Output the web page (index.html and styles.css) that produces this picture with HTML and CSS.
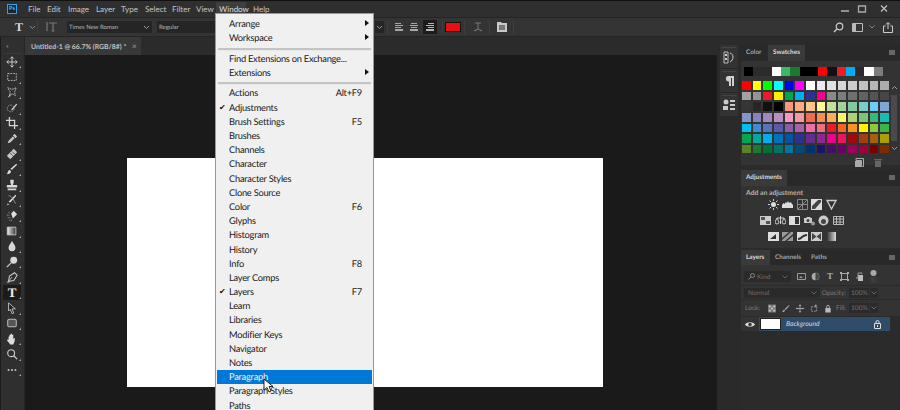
FILE: index.html
```html
<!DOCTYPE html>
<html lang="en">
<head>
<meta charset="utf-8">
<title>Photoshop Window menu</title>
<link rel="stylesheet" href="styles.css">
</head>
<body>
<div class="app">
  <header class="menubar">
    <span class="logo">Ps</span>
    <nav class="menus">
      <span class="m">File</span><span class="m">Edit</span><span class="m">Image</span><span class="m">Layer</span><span class="m">Type</span><span class="m">Select</span><span class="m">Filter</span><span class="m">View</span><span class="m m-on">Window</span><span class="m">Help</span>
    </nav>
    <div class="winbtns">
      <svg width="10" height="10" viewBox="0 0 10 10"><path d="M1 7h8" stroke="#aaa" stroke-width="1.6"/></svg>
      <svg width="10" height="10" viewBox="0 0 10 10"><path d="M1.500 2h7v6h-7z" fill="none" stroke="#aaa" stroke-width="1.300"/></svg>
      <svg class="wclose" width="10" height="10" viewBox="0 0 10 10"><path d="M2 1.500l6 6M8 1.500l-6 6" stroke="#bbb" stroke-width="1.300"/></svg>
    </div>
  </header>

  <section class="options">
    <span class="o-t">T</span>
    <svg class="chev" width="7" height="5" viewBox="0 0 7 5"><path d="M1 1l2.500 2.500L6 1" fill="none" stroke="#888"/></svg>
    <i class="sep s1"></i>
    <svg class="o-tt" width="12" height="12" viewBox="0 0 12 12"><path d="M3 2h8M7 2v8M5.500 10h3M1 1v9" fill="none" stroke="#777" stroke-width="1.200"/></svg>
    <span class="field f-font">Times New Roman<svg width="7" height="5" viewBox="0 0 7 5"><path d="M1 1l2.500 2.500L6 1" fill="none" stroke="#999"/></svg></span>
    <span class="field f-style">Regular</span>
    <span class="field f-aa"><svg width="7" height="5" viewBox="0 0 7 5"><path d="M1 1l2.500 2.500L6 1" fill="none" stroke="#999"/></svg></span>
    <i class="sep s2"></i>
    <svg class="al" width="10" height="10" viewBox="0 0 10 10"><path d="M1 1h6v1H1zM1 3h8v1H1zM1 5h6v1H1zM1 7h8v2H1z" fill="#a8a8a8"/></svg>
    <svg class="al" width="10" height="10" viewBox="0 0 10 10"><path d="M2 1h6v1H2zM1 3h8v1H1zM2 5h6v1H2zM1 7h8v2H1z" fill="#a8a8a8"/></svg>
    <span class="al-on"><svg width="10" height="10" viewBox="0 0 10 10"><path d="M3 1h6v1H3zM1 3h8v1H1zM3 5h6v1H3zM1 7h8v2H1z" fill="#b5b5b5"/></svg></span>
    <i class="sep s3"></i>
    <span class="color"></span>
    <i class="sep s5"></i>
    <svg class="warp" width="10" height="10" viewBox="0 0 10 10"><path d="M2 1h6M5 1v6M1 9l4-2 4 2" fill="none" stroke="#777" stroke-width="1.100"/></svg>
    <i class="sep s4"></i>
    <svg class="pan" width="10" height="10" viewBox="0 0 10 10"><path d="M0 0h4l1 1h5v9H0z" fill="#c8c8c8"/><path d="M2 3h6v5H2z" fill="#777"/></svg>
    <i class="sep s4"></i>
    <div class="o-right">
      <svg width="11" height="11" viewBox="0 0 11 11"><circle cx="6.500" cy="4.500" r="3.300" fill="none" stroke="#ccc" stroke-width="1.200"/><path d="M4 7l-3 3" stroke="#ccc" stroke-width="1.400"/></svg>
      <svg class="wsp" width="11" height="9" viewBox="0 0 11 9"><path d="M.5.500h10v8H.5z" fill="none" stroke="#bbb"/><path d="M1 1h3v7H1z" fill="#bbb"/></svg>
      <svg class="chev2" width="6" height="4" viewBox="0 0 6 4"><path d="M.5.500l2.500 2.500L5.500.500" fill="none" stroke="#888"/></svg>
      <svg class="share" width="10" height="11" viewBox="0 0 10 11"><path d="M2.500 4H.5v6.500h9V4h-2M5 7V.8M3 2.500L5 .5l2 2" fill="none" stroke="#ccc"/></svg>
    </div>
  </section>

  <main class="work">
    <aside class="tools">
      <div class="grip">&#187;</div>
      <div class="tool"><svg viewBox="0 0 14 14"><path d="M7 1v12M1 7h12M7 1L5 3M7 1l2 2M7 13l-2-2M7 13l2-2M1 7l2-2M1 7l2 2M13 7l-2-2M13 7l-2 2" fill="none" stroke="#d0d0d0" stroke-width="1.100"/></svg></div>
      <div class="tool"><svg viewBox="0 0 14 14"><path d="M2 3h10v8H2z" fill="none" stroke="#c8c8c8" stroke-dasharray="2 1.200"/></svg></div>
      <div class="tool"><svg viewBox="0 0 14 14"><path d="M2 2l5 2 5-2-2 5 1 4-4-2-3 3 1-5z" fill="none" stroke="#c8c8c8" stroke-dasharray="2 .8"/><path d="M3 13l2-3" stroke="#ddd"/></svg></div>
      <div class="tool"><svg viewBox="0 0 14 14"><circle cx="5.500" cy="7.500" r="4" fill="none" stroke="#999" stroke-dasharray="2 1"/><path d="M6 9l6-7 1 1-6 7z" fill="#ddd"/></svg></div>
      <div class="tool"><svg viewBox="0 0 14 14"><path d="M4 0v10h10M0 4h10v10" fill="none" stroke="#d4d4d4" stroke-width="1.500"/></svg></div>
      <div class="tool"><svg viewBox="0 0 14 14"><path d="M2 12l1-3 5-5 2 2-5 5zM8 3l2-2 3 3-2 2z" fill="#c8c8c8"/></svg></div>
      <div class="tool"><svg viewBox="0 0 14 14"><path d="M1 9l8-8 4 4-8 8z" fill="#c8c8c8"/><path d="M5 6l3 3M7 4l3 3" stroke="#444"/></svg></div>
      <div class="tool"><svg viewBox="0 0 14 14"><path d="M12 1l1 1-6 6-2-1zM4 8l2 2c-1 3-3 3-5 3 1-1 1-4 3-5z" fill="#ddd"/></svg></div>
      <div class="tool"><svg viewBox="0 0 14 14"><path d="M5 1h4v3L8 7h5v3H1V7h5L5 4zM2 11h10v2H2z" fill="#d8d8d8"/></svg></div>
      <div class="tool"><svg viewBox="0 0 14 14"><path d="M11 1l1 1-7 8-2-1zM2 11l2 1-3 1z" fill="#ddd"/><path d="M3 2c3 0 5 3 8 9" fill="none" stroke="#aaa"/></svg></div>
      <div class="tool"><svg viewBox="0 0 14 14"><path d="M6 4l3-3 4 4-5 5z" fill="#ddd"/><path d="M1 6h3M2 9h3M4 12h4M3 3h2" stroke="#bbb" stroke-dasharray="1 1"/></svg></div>
      <div class="tool"><svg viewBox="0 0 14 14"><defs><linearGradient id="g"><stop offset="0" stop-color="#eee"/><stop offset="1" stop-color="#333"/></linearGradient></defs><path d="M1.500 2.500h10v9h-10z" fill="url(#g)" stroke="#ccc"/></svg></div>
      <div class="tool"><svg viewBox="0 0 14 14"><path d="M7 1c1 3 4 5 4 8a4 4 0 0 1-8 0c0-3 3-5 4-8z" fill="#d8d8d8"/></svg></div>
      <div class="tool"><svg viewBox="0 0 14 14"><circle cx="9" cy="5" r="4" fill="#d8d8d8"/><path d="M6 8l-5 5" stroke="#ccc" stroke-width="1.500"/></svg></div>
      <div class="tool"><svg viewBox="0 0 14 14"><path d="M3 12l1-6 6-4 3 3-4 6z" fill="none" stroke="#ccc" stroke-width="1.200"/><path d="M3 12l4-5" stroke="#ccc"/><path d="M1 13h3" stroke="#ccc"/></svg></div>
      <div class="tool on"><span class="tool-t">T</span></div>
      <div class="tool"><svg viewBox="0 0 14 14"><path d="M3 1l8 7H7l2 5-2 .5-2-5-2 2z" fill="#222" stroke="#ccc"/></svg></div>
      <div class="tool"><svg viewBox="0 0 14 14"><rect x="2" y="2.500" width="10" height="9" rx="2" fill="#555" stroke="#bbb" stroke-width="1.200"/></svg></div>
      <div class="tool"><svg viewBox="0 0 14 14"><path d="M3 8V4h1v3-5h1.500v5V1H7v6-5h1.500v6l.5-2h1.500L10 10l-1.500 3.500H5L1 8.500l1-1z" fill="#ddd"/></svg></div>
      <div class="tool"><svg viewBox="0 0 14 14"><circle cx="6" cy="6" r="4" fill="none" stroke="#ccc" stroke-width="1.300"/><path d="M9 9l4 4" stroke="#ccc" stroke-width="1.500"/></svg></div>
      <div class="tool dots"><svg viewBox="0 0 14 14"><path d="M2 6h2v2H2zM6 6h2v2H6zM10 6h2v2h-2z" fill="#ddd"/></svg></div>
    </aside>

    <section class="doc">
      <div class="tabs">
        <div class="tab">Untitled-1 @ 66.7% (RGB/8#) * <span class="x">&#215;</span></div>
      </div>
      <div class="stage"><div class="canvas"></div></div>
    </section>

    <aside class="dock">
      <div class="strip"></div>
      <div class="dock-group">
        <div class="grip-h"></div>
        <svg width="12" height="13" viewBox="0 0 12 13"><path d="M1 1h4v11H1z" fill="none" stroke="#bbb"/><path d="M2 3h2v2H2zM2 7h2v2H2z" fill="#ccc"/><path d="M7 2c4 1 4 7 0 9" fill="none" stroke="#ccc"/></svg>
      </div>
      <div class="dock-group">
        <div class="grip-h"></div>
        <svg width="12" height="12" viewBox="0 0 12 12"><path d="M5 1h6v10H9V3H8v8H6V6.500a2.800 2.800 0 0 1-1-5.500z" fill="#d0d0d0"/></svg>
      </div>
      <div class="dock-group">
        <div class="grip-h"></div>
        <svg width="12" height="12" viewBox="0 0 12 12"><circle cx="3" cy="3" r="2.500" fill="#ccc"/><path d="M7 1h5v2H7zM7 5h5v2H7zM0 7h5v4H0zM7 9h5v2H7z" fill="#ccc"/></svg>
      </div>
    </aside>

    <aside class="panels">
      <div class="strip"></div>
      <section class="panel p-swatches">
        <div class="ptabs"><span class="pt w-color">Color</span><span class="pt act w-sw">Swatches</span><i class="pmenu"></i></div>
        <div class="recent">
          <i style="background:#000"></i><i style="background:#2b2b2b"></i><i style="background:#2b2b2b"></i><i style="background:#fff"></i><i style="background:#3cb868"></i><i style="background:#1a7b30"></i><i style="background:#000"></i><i style="background:#000"></i><i style="background:#f00"></i><i style="background:#111"></i><i style="background:#ed1c24"></i><i style="background:#00aeef"></i><i style="background:#2b2b2b"></i><i style="background:#fff"></i><i style="background:#7d7d7d"></i>
        </div>
        <div class="sw-wrap">
          <div class="swatches">
            <i style="background:#f00"></i><i style="background:#ff0"></i><i style="background:#0f0"></i><i style="background:#0ff"></i><i style="background:#00f"></i><i style="background:#f0f"></i><i style="background:#fff"></i><i style="background:#ebebeb"></i><i style="background:#e1e1e1"></i><i style="background:#d7d7d7"></i><i style="background:#ccc"></i><i style="background:#c2c2c2"></i><i style="background:#b7b7b7"></i><i style="background:#acacac"></i>
            <i style="background:#a1a1a1"></i><i style="background:#959595"></i><i style="background:#ed1c24"></i><i style="background:#fff200"></i><i style="background:#00a651"></i><i style="background:#00aeef"></i><i style="background:#2e3192"></i><i style="background:#ec008c"></i><i style="background:#898989"></i><i style="background:#7d7d7d"></i><i style="background:#707070"></i><i style="background:#626262"></i><i style="background:#555"></i><i style="background:#464646"></i>
            <i style="background:#363636"></i><i style="background:#262626"></i><i style="background:#111"></i><i style="background:#000"></i><i style="background:#f7977a"></i><i style="background:#f9ad81"></i><i style="background:#fdc68a"></i><i style="background:#fff79a"></i><i style="background:#c4df9b"></i><i style="background:#a2d39c"></i><i style="background:#82ca9d"></i><i style="background:#7bcdc8"></i><i style="background:#6ecff6"></i><i style="background:#7ea7d8"></i>
            <i style="background:#8493ca"></i><i style="background:#8882be"></i><i style="background:#a187be"></i><i style="background:#bc8dbf"></i><i style="background:#f49ac2"></i><i style="background:#f6989d"></i><i style="background:#f26c4f"></i><i style="background:#f68e55"></i><i style="background:#fbaf5c"></i><i style="background:#fff467"></i><i style="background:#acd372"></i><i style="background:#7cc576"></i><i style="background:#3bb878"></i><i style="background:#1abbb4"></i>
            <i style="background:#00bff3"></i><i style="background:#438ccb"></i><i style="background:#5574b9"></i><i style="background:#5c5aa7"></i><i style="background:#855fa8"></i><i style="background:#a763a8"></i><i style="background:#ee6ea6"></i><i style="background:#f26d7d"></i><i style="background:#ed1c24"></i><i style="background:#f26522"></i><i style="background:#f7941d"></i><i style="background:#fff200"></i><i style="background:#8dc63f"></i><i style="background:#39b54a"></i>
            <i style="background:#00a651"></i><i style="background:#00a99d"></i><i style="background:#00aeef"></i><i style="background:#0072bc"></i><i style="background:#0054a6"></i><i style="background:#2e3192"></i><i style="background:#662d91"></i><i style="background:#92278f"></i><i style="background:#ec008c"></i><i style="background:#ed145b"></i><i style="background:#9e0b0f"></i><i style="background:#a0410d"></i><i style="background:#a36209"></i><i style="background:#aba000"></i>
            <i style="background:#598527"></i><i style="background:#1a7b30"></i><i style="background:#007236"></i><i style="background:#00746b"></i><i style="background:#0076a3"></i><i style="background:#004b80"></i><i style="background:#003471"></i><i style="background:#1b1464"></i><i style="background:#440e62"></i><i style="background:#630460"></i><i style="background:#9e005d"></i><i style="background:#9e0039"></i><i style="background:#790000"></i><i style="background:#7b2e00"></i>
          </div>
          <div class="sw-scroll">
            <svg width="7" height="5" viewBox="0 0 7 5"><path d="M1 4l2.500-2.500L6 4" fill="none" stroke="#999"/></svg>
            <b></b>
            <svg width="7" height="5" viewBox="0 0 7 5"><path d="M1 1l2.500 2.500L6 1" fill="none" stroke="#999"/></svg>
          </div>
        </div>
        <div class="sw-foot">
          <svg width="9" height="9" viewBox="0 0 9 9"><path d="M1 2.500V.5h7.500v8H6.500V2.500z" fill="none" stroke="#aaa"/><path d="M0 3h6v6H0z" fill="#aaa"/></svg>
          <svg width="8" height="9" viewBox="0 0 8 9"><path d="M0 1h8v1H0zM1 2.500h6V9H1z" fill="#666"/></svg>
        </div>
      </section>

      <section class="panel p-adjust">
        <div class="ptabs"><span class="pt act w-adj">Adjustments</span><i class="pmenu"></i></div>
        <div class="adj-title">Add an adjustment</div>
        <div class="adj-row">
          <svg viewBox="0 0 11 11"><circle cx="5.500" cy="5.500" r="2.500" fill="#ddd"/><path d="M5.500 0v2M5.500 9v2M0 5.500h2M9 5.500h2M1.500 1.500l1.500 1.500M8 8l1.500 1.500M9.500 1.500L8 3M3 8L1.500 9.500" stroke="#ccc"/></svg>
          <svg viewBox="0 0 11 11"><path d="M0 9V6l1.500-2 1 1L4 3l1 1 1-2 1 2 1.500-1L11 6v3z" fill="#ddd"/></svg>
          <svg viewBox="0 0 11 11"><path d="M.5.500h10v10H.5zM.5 5.500h10M5.500.500v10" fill="none" stroke="#888"/><path d="M1 10L10 1" stroke="#888"/></svg>
          <svg viewBox="0 0 11 11"><path d="M0 0h11v11H0z" fill="#ddd"/><path d="M1 10V7l6-6h3v2L4 10z" fill="#444"/></svg>
          <svg viewBox="0 0 11 11"><path d="M1 1.500h9L5.500 10z" fill="none" stroke="#ccc" stroke-width="1.300"/></svg>
        </div>
        <div class="adj-row">
          <svg viewBox="0 0 11 11"><path d="M0 1h11v9H0z" fill="#ccc"/><path d="M1 2h4v3H1zM6 6h4v3H6z" fill="#555"/></svg>
          <svg viewBox="0 0 11 11"><path d="M5.500 1v8M2 3h7M0 7l2-4 2 4a2 2 0 0 1-4 0zM7 7l2-4 2 4a2 2 0 0 1-4 0z" fill="none" stroke="#ccc"/></svg>
          <svg viewBox="0 0 11 11"><path d="M0 1h11v9H0z" fill="#ddd"/><path d="M6 2h4v7H6z" fill="#333"/></svg>
          <svg viewBox="0 0 11 11"><path d="M0 3h2l1-1h3l1 1h1v5H0z" fill="#ccc"/><circle cx="4" cy="5.500" r="1.500" fill="#444"/><circle cx="9" cy="8.500" r="2" fill="#999"/></svg>
          <svg viewBox="0 0 11 11"><circle cx="5.500" cy="5.500" r="5" fill="#ccc"/><circle cx="5.500" cy="6.500" r="2.500" fill="#444"/></svg>
          <svg viewBox="0 0 11 11"><path d="M.5 1.500h10v8H.5zM.5 4h10M.5 7h10M3.500 1.500v8M7 1.500v8" fill="none" stroke="#bbb"/></svg>
        </div>
        <div class="adj-row">
          <svg viewBox="0 0 11 11"><path d="M0 1h11v9H0z" fill="#ddd"/><path d="M2 8l6-5v5z" fill="#333"/></svg>
          <svg viewBox="0 0 11 11"><path d="M0 1h11v9H0z" fill="#999"/><path d="M0 7l7-6h2L0 9zM3 10l8-7v2l-6 5z" fill="#333"/></svg>
          <svg viewBox="0 0 11 11"><path d="M0 1h11v9H0z" fill="#ddd"/><path d="M1 7c3 0 4-4 9-4v2C6 5 5 9 1 9z" fill="#333"/></svg>
          <svg viewBox="0 0 11 11"><path d="M0 1h11v9H0z" fill="#ccc"/><path d="M1 2l4.500 3.500L1 9zM10 2L5.500 5.500 10 9z" fill="#444"/></svg>
          <svg viewBox="0 0 11 11"><defs><linearGradient id="g2"><stop offset="0" stop-color="#333"/><stop offset="1" stop-color="#ddd"/></linearGradient></defs><path d="M1 1h9v9H1z" fill="url(#g2)"/></svg>
        </div>
      </section>

      <section class="panel p-layers">
        <div class="ptabs"><span class="pt act w-lay">Layers</span><span class="pt w-chan">Channels</span><span class="pt">Paths</span><i class="pmenu"></i></div>
        <div class="l-row l-filter">
          <span class="l-field lf-kind"><svg width="7" height="7" viewBox="0 0 7 7"><circle cx="4.500" cy="2.500" r="2" fill="none" stroke="#888"/><path d="M3 4L.5 6.500" stroke="#888"/></svg> Kind<svg class="ml" width="6" height="4" viewBox="0 0 6 4"><path d="M.5.500l2.500 2.500L5.500.500" fill="none" stroke="#666"/></svg></span>
          <div class="l-icons">
            <svg viewBox="0 0 9 9"><path d="M.5 1.500h8v6h-8z" fill="none" stroke="#999"/><path d="M2 6l2-2 2 2z" fill="#999"/></svg>
            <svg viewBox="0 0 9 9"><circle cx="4.500" cy="4.500" r="3.800" fill="#aaa"/><path d="M4.500 1a3.500 3.500 0 0 1 0 7z" fill="#444"/></svg>
            <span class="l-t">T</span>
            <svg viewBox="0 0 9 9"><path d="M1.500 1.500h6v6h-6z" fill="none" stroke="#aaa"/><path d="M0 0h2v2H0zM7 0h2v2H7zM0 7h2v2H0zM7 7h2v2H7z" fill="#aaa"/></svg>
            <svg viewBox="0 0 9 9"><path d="M3 3h5v6H3z" fill="#bbb"/><path d="M1 6h2V1h4v1" fill="none" stroke="#999"/></svg>
            <svg viewBox="0 0 9 13" class="tall"><circle cx="4.500" cy="3" r="3" fill="#aaa"/><path d="M1.500 7h6v6h-6z" fill="#3c3c3c"/></svg>
          </div>
        </div>
        <div class="l-row l-blend">
          <span class="l-field lf-normal">Normal<svg class="ml" width="6" height="4" viewBox="0 0 6 4"><path d="M.5.500l2.500 2.500L5.500.500" fill="none" stroke="#666"/></svg></span>
          <span class="l-lab l-end">Opacity:</span><span class="l-field lf-num">100%</span><span class="l-field lf-ch"><svg width="6" height="4" viewBox="0 0 6 4"><path d="M.5.500l2.500 2.500L5.500.500" fill="none" stroke="#666"/></svg></span>
        </div>
        <div class="l-row l-lock">
          <span class="l-lab">Lock:</span>
          <div class="lock-icons">
            <svg viewBox="0 0 9 9"><path d="M0 0h9v9H0z" fill="#777"/><path d="M1 1h2v2H1zM6 1h2v2H6zM3.500 3.500h2v2h-2zM1 6h2v2H1zM6 6h2v2H6z" fill="#ccc"/></svg>
            <svg viewBox="0 0 9 9"><path d="M8 .5l.5.5-4 5-1.500-1zM2.500 5.500l1 1C3 8.500 1.500 8.500 0 8.500c1-1 1-2.500 2.500-3z" fill="#aaa"/></svg>
            <svg viewBox="0 0 9 9"><path d="M4.500 0v9M0 4.500h9" stroke="#aaa"/><path d="M4.500 0L3 1.500h3zM4.500 9L3 7.500h3zM0 4.500L1.500 3v3zM9 4.500L7.500 3v3z" fill="#aaa"/></svg>
            <svg viewBox="0 0 9 9"><path d="M1.500 2.500h6v5h-6z" fill="none" stroke="#999" stroke-dasharray="2 1"/><path d="M6 0h1v3H6zM5 1h3v1H5z" fill="#aaa"/></svg>
            <svg viewBox="0 0 9 9"><path d="M1.500 4h6v5h-6z" fill="#bbb"/><path d="M3 4V2.500a1.500 1.500 0 0 1 3 0V4" fill="none" stroke="#bbb"/></svg>
          </div>
          <span class="l-lab l-end">Fill:</span><span class="l-field lf-num">100%</span><span class="l-field lf-ch"><svg width="6" height="4" viewBox="0 0 6 4"><path d="M.5.500l2.500 2.500L5.500.500" fill="none" stroke="#666"/></svg></span>
        </div>
        <div class="layer-line">
          <span class="eye"><svg width="10" height="7" viewBox="0 0 10 7"><path d="M0 3.500C2 .5 8 .5 10 3.500 8 6.500 2 6.500 0 3.500z" fill="#ddd"/><circle cx="5" cy="3.500" r="1.700" fill="#333"/></svg></span>
          <div class="layer">
            <span class="thumb"></span>
            <span class="l-name">Background</span>
            <svg width="7" height="9" viewBox="0 0 7 9"><path d="M.5 3.500h6v5h-6z" fill="none" stroke="#ddd"/><path d="M2 3.500V2a1.500 1.500 0 0 1 3 0v1.500" fill="none" stroke="#ddd"/><path d="M3 5h1v2H3z" fill="#ddd"/></svg>
          </div>
        </div>
      </section>
    </aside>
  </main>

  <div class="menu">
    <div class="mi">Arrange<span class="arr"></span></div>
    <div class="mi">Workspace<span class="arr"></span></div>
    <div class="msep"></div>
    <div class="mi">Find Extensions on Exchange...</div>
    <div class="mi">Extensions<span class="arr"></span></div>
    <div class="msep"></div>
    <div class="mi">Actions<span class="key">Alt+F9</span></div>
    <div class="mi chk">Adjustments</div>
    <div class="mi">Brush Settings<span class="key">F5</span></div>
    <div class="mi">Brushes</div>
    <div class="mi">Channels</div>
    <div class="mi">Character</div>
    <div class="mi">Character Styles</div>
    <div class="mi">Clone Source</div>
    <div class="mi">Color<span class="key">F6</span></div>
    <div class="mi">Glyphs</div>
    <div class="mi">Histogram</div>
    <div class="mi">History</div>
    <div class="mi">Info<span class="key">F8</span></div>
    <div class="mi">Layer Comps</div>
    <div class="mi chk">Layers<span class="key">F7</span></div>
    <div class="mi">Learn</div>
    <div class="mi">Libraries</div>
    <div class="mi">Modifier Keys</div>
    <div class="mi">Navigator</div>
    <div class="mi">Notes</div>
    <div class="mi sel">Paragraph</div>
    <div class="mi">Paragraph Styles</div>
    <div class="mi">Paths</div>
  </div>
  <svg class="cursor" width="11" height="16" viewBox="0 0 11 16"><path d="M1 1v11l3-2.500 2 4.500 2-1-2-4.500h4z" fill="#fff" stroke="#111" stroke-width=".9"/></svg>
</div>
</body>
</html>
```
FILE: styles.css
```css
* { box-sizing: border-box; }
html, body { margin: 0; padding: 0; }
body { width: 900px; height: 410px; overflow: hidden; background: #262626; font-family: Lato, "Open Sans", "Liberation Sans", sans-serif; text-rendering: geometricPrecision; }
svg { display: block; flex: none; }
i { display: block; font-style: normal; }

.app { position: relative; width: 900px; height: 410px; display: flex; flex-direction: column; border-top: 1px solid #111; overflow: hidden; }

.menubar { height: 16px; display: flex; align-items: center; background: #2f2f2f; color: #c4c4c4; font-size: 8px; padding-left: 7px; flex: none; }
.logo { width: 10px; height: 10px; border: 1px solid #2fa3e6; background: #0b2a3f; color: #5cc0f5; font-size: 5.500px; font-weight: 700; line-height: 8px; text-align: center; }
.menus { display: grid; grid-template-columns: 19px 21px 28px 25px 24px 27px 24px 20px 37px 20px; margin-left: 11px; }
.m { height: 14px; line-height: 14px; }
.m-on { background: #3e3e3e; color: #ddd; width: 30px; padding-left: 3px; }
.winbtns { margin-left: auto; display: flex; gap: 7px; padding-right: 11px; align-items: center; }
.wclose { margin-left: 5px; }

.options { height: 20px; flex: none; display: flex; align-items: center; background: #343434; border-top: 1px solid #242424; border-bottom: 1px solid #242424; padding-left: 15px; }
.o-t { font: 700 12px "Liberation Serif", serif; color: #ddd; width: 9px; }
.chev { margin-left: 5px; }
.sep { width: 1px; height: 14px; background: #3e3e3e; }
.s1 { margin: 0 8px 0 1px; }
.o-tt { margin-right: 9px; }
.field { height: 12px; background: #252525; color: #b5b5b5; font-size: 6px; display: flex; align-items: center; padding-left: 2px; }
.f-font { width: 85px; justify-content: space-between; padding-right: 2px; }
.f-style { width: 217px; margin-left: 5px; }
.f-aa { width: 9px; margin-left: 1px; justify-content: center; padding: 0; }
.s2 { margin: 0 6px 0 3px; }
.al { margin-right: 5px; }
.al-on { width: 14px; height: 14px; background: #1c1c1c; display: flex; align-items: center; justify-content: center; margin-left: -1px; }
.s3 { margin: 0 2px 0 5px; }
.color { width: 16px; height: 10px; background: #e81010; border: 1px solid #111; }
.s5 { margin: 0 8px 0 3px; }
.warp { margin-right: 6px; }
.s4 { margin: 0 7px 0 0; }
.pan { margin-right: 6px; }
.o-right { margin-left: auto; display: flex; align-items: center; padding-right: 7px; }
.wsp { margin-left: 8px; }
.chev2 { margin: 0 8px 0 6px; }

.work { flex: 1; display: flex; min-height: 0; }

.tools { width: 25px; flex: none; background: #2f2f2f; padding-top: 6px; border-left: 1px solid #1c1c1c; border-right: 1px solid #262626; }
.grip { color: #aaa; font-size: 6px; line-height: 8px; height: 11px; padding-left: 3px; border-bottom: 1px solid #3a3a3a; margin: 0 2px; }
.tool { position: relative; height: 15.400px; margin: 0 3px 0 2px; display: flex; align-items: center; justify-content: center; }
.tool svg { width: 12px; height: 12px; }
.tool::after { content: ""; position: absolute; right: 0; bottom: 1px; border: 1px solid transparent; border-right-color: #aaa; border-bottom-color: #aaa; }
.tool.on { background: #1b1b1b; }
.tool-t { font: 700 13px/14px "Liberation Serif", serif; color: #eee; }

.doc { width: 692px; flex: none; display: flex; flex-direction: column; }
.tabs { height: 18px; background: #2b2b2b; flex: none; display: flex; }
.tab { width: 116px; background: #383838; color: #c2c2c2; font-size: 6.900px; font-weight: 700; line-height: 18px; padding-left: 6px; white-space: nowrap; }
.x { color: #888; margin-left: 4px; font-size: 8px; }
.stage { flex: 1; background: #1a1a1a; padding: 103px 0 0 102px; }
.canvas { width: 476px; height: 229px; background: #fff; }

.dock { width: 24px; flex: none; background: #2a2a2a; }
.strip { height: 8px; background: #2b2b2b; }
.dock-group { width: 18px; height: 24px; background: #333; margin-left: 3px; padding-top: 2px; display: flex; flex-direction: column; align-items: center; gap: 2px; border-bottom: 1px solid #282828; }
.grip-h { width: 14px; height: 2px; border-top: 1px solid #444; }

.panels { width: 159px; flex: none; background: #2b2b2b; }
.panel { background: #333; }
.ptabs { display: flex; height: 16px; background: #292929; font-size: 6.400px; font-weight: 700; color: #a5a5a5; position: relative; line-height: 16px; }
.pt { padding: 0 0 0 5px; }
.pt.act { background: #3a3a3a; color: #dcdcdc; }
.w-color { width: 27px; }
.w-sw { width: 37px; }
.w-adj { width: 46px; }
.w-lay { width: 29px; }
.w-chan { width: 36px; }
.pmenu { position: absolute; right: 5px; top: 5px; width: 6px; height: 5px; background: #666; }

.p-swatches { height: 120px; }
.recent { display: flex; padding: 6px 0 0 3px; height: 19px; }
.recent i { width: 9.250px; height: 9px; }
.sw-wrap { display: flex; }
.swatches { width: 149px; display: grid; grid-template-columns: repeat(14, 1fr); grid-auto-rows: 10.650px; }
.swatches i { border: .5px solid #333; }
.sw-scroll { width: 8px; height: 74px; display: flex; flex-direction: column; align-items: center; justify-content: space-between; padding: 5px 0 3px; }
.sw-scroll b { display: block; width: 6px; height: 46px; background: #4a4a4a; }
.sw-foot { display: flex; justify-content: flex-end; gap: 10px; padding: 4px 18px 0 0; }

.p-adjust { height: 78px; margin-top: 5px; }
.adj-title { font-size: 6.800px; font-weight: 700; color: #b4b4b4; padding: 2px 0 0 5px; height: 10px; line-height: 10px; }
.adj-row { display: flex; justify-content: center; gap: 3.500px; height: 16px; align-items: center; padding-right: 37px; }
.adj-row svg { width: 11px; height: 11px; }

.p-layers { margin-top: 2px; height: 162px; background: #2b2b2b; }
.p-layers .ptabs { height: 15px; line-height: 15px; }
.l-row { display: flex; align-items: center; background: #333; padding: 0 22px 0 3px; font-size: 6.600px; color: #7a7a7a; border-bottom: 1px solid #2a2a2a; }
.l-filter { height: 21px; padding-top: 3px; }
.l-blend { height: 14px; }
.l-lock { height: 17px; }
.l-field { height: 10px; background: #2a2a2a; display: flex; align-items: center; padding-left: 4px; gap: 2px; color: #707070; }
.ml { margin-left: auto; margin-right: 3px; }
.lf-kind { width: 52px; height: 11px; }
.lf-normal { width: 76px; }
.lf-num { width: 20px; padding-left: 2px; margin-left: 1px; }
.lf-ch { width: 8px; padding: 0; margin-left: 1px; justify-content: center; }
.l-lab { margin-left: 5px; }
.l-end { margin-left: auto; margin-right: 2px; }
.l-lock .l-lab:first-child { margin-left: 1px; }
.l-icons { display: flex; gap: 5.500px; margin-left: 6px; align-items: center; }
.l-icons svg { width: 9px; height: 9px; }
.l-icons svg.tall { height: 13px; }
.l-t { font: 700 9px/9px "Liberation Serif", serif; color: #aaa; width: 9px; text-align: center; }
.lock-icons { display: flex; gap: 6px; margin-left: 8px; }
.lock-icons svg { width: 8px; height: 9px; }
.layer-line { display: flex; height: 14px; background: #333; width: 149px; }
.eye { width: 18px; display: flex; align-items: center; justify-content: center; }
.layer { flex: 1; background: #2f4c68; display: flex; align-items: center; padding: 0 9px 0 2px; }
.thumb { width: 19px; height: 10px; background: #fff; box-shadow: 0 0 0 1px #222; }
.l-name { font-size: 6.800px; font-style: italic; color: #d4dde6; margin-left: 6px; flex: 1; }

.menu { position: absolute; left: 215px; top: 12px; width: 159px; height: 400px; background: #f0f0f0; border: 1px solid #999; padding: 2.700px 1px 0; color: #1a1a1a; font-size: 9.300px; letter-spacing: -.25px; }
.mi { position: relative; height: 14.200px; line-height: 14.200px; padding-left: 12px; white-space: nowrap; }
.msep { height: 6.500px; margin: 0 1px; padding-top: 2.500px; }
.msep::before { content: ""; display: block; background: #c4c4c4; border-bottom: 1px solid #e8e8e8; height: 2px; }
.key { position: absolute; right: 10px; top: 0; }
.arr { position: absolute; right: 3px; top: 3px; border: 3px solid transparent; border-left: 4px solid #111; border-right: 0; }
.chk::before { content: "\2714"; position: absolute; left: 2px; top: 0; font-size: 8px; color: #111; font-family: "DejaVu Sans", sans-serif; }
.sel { background: #0078d7; color: #f4f4f4; }
.cursor { position: absolute; left: 263px; top: 377px; }
```
